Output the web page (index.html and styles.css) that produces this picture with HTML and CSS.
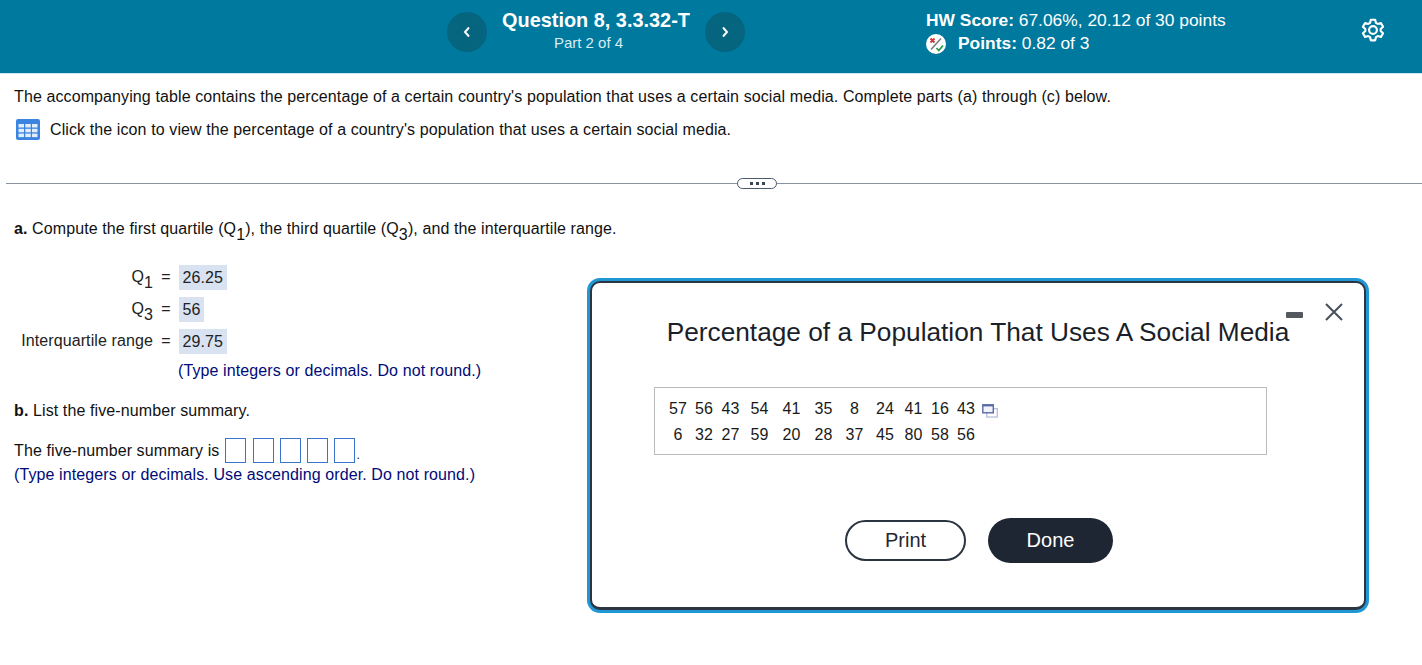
FILE: index.html
```html
<!DOCTYPE html>
<html lang="en">
<head>
    <meta charset="UTF-8">
    <meta name="viewport" content="width=device-width, initial-scale=1.0">
    <title>Question 8, 3.3.32-T</title>
    <link rel="stylesheet" href="styles.css">
</head>
<body>
    <header class="top-bar">
        <div class="question-nav">
            <button class="nav-btn" aria-label="Previous">
                <svg width="10" height="12" viewBox="0 0 10 12"><path d="M7 1.500 3 6l4 4.500" fill="none" stroke="#fff" stroke-width="2"/></svg>
            </button>
            <div class="question-title">
                <div class="question-name">Question 8, 3.3.32-T</div>
                <div class="question-part">Part 2 of 4</div>
            </div>
            <button class="nav-btn" aria-label="Next">
                <svg width="10" height="12" viewBox="0 0 10 12"><path d="M3 1.500 7 6l-4 4.500" fill="none" stroke="#fff" stroke-width="2"/></svg>
            </button>
        </div>
        <div class="score">
            <div><b>HW Score:</b> 67.06%, 20.12 of 30 points</div>
            <div class="score-points">
                <svg class="points-icon" width="20" height="20" viewBox="0 0 20 20">
                    <circle cx="10" cy="10" r="10" fill="#fff"/>
                    <path d="M4.500 4.500 8.500 8.500M8.500 4.500 4.500 8.500" stroke="#d0353b" stroke-width="1.800"/>
                    <path d="M5 15.500 15 4.500" stroke="#7a7a7a" stroke-width="1.500"/>
                    <path d="M10.500 14 12.800 16.500 17 11.500" fill="none" stroke="#2a9a46" stroke-width="1.800"/>
                </svg>
                <span><b>Points:</b> 0.82 of 3</span>
            </div>
        </div>
        <button class="settings-btn" aria-label="Settings">
            <svg width="26" height="26" viewBox="0 0 24 24" fill="none" stroke="#fff" stroke-width="2" stroke-linejoin="round">
                <path d="M10 2.500h4l.7 2.900 1.700 1 2.900-.8 2 3.400-2.200 2.100v1.800l2.200 2.100-2 3.400-2.900-.8-1.700 1-.7 2.900h-4l-.7-2.900-1.700-1-2.900.8-2-3.400 2.200-2.100v-1.800L2.700 9l2-3.400 2.900.8 1.700-1z"/>
                <circle cx="12" cy="12" r="3.600"/>
            </svg>
        </button>
    </header>

    <main class="content">
        <section class="intro">
            <p>The accompanying table contains the percentage of a certain country's population that uses a certain social media. Complete parts (a) through (c) below.</p>
            <p class="data-link">
                <svg class="table-icon" width="24" height="21" viewBox="0 0 24 21">
                    <rect width="24" height="21" rx="2" fill="#3b84e0"/>
                    <g fill="#e2eefc">
                        <rect x="2.500" y="5" width="5.500" height="3.500"/><rect x="9.300" y="5" width="5.500" height="3.500"/><rect x="16" y="5" width="5.500" height="3.500"/>
                        <rect x="2.500" y="9.800" width="5.500" height="3.500"/><rect x="9.300" y="9.800" width="5.500" height="3.500"/><rect x="16" y="9.800" width="5.500" height="3.500"/>
                        <rect x="2.500" y="14.600" width="5.500" height="3.500"/><rect x="9.300" y="14.600" width="5.500" height="3.500"/><rect x="16" y="14.600" width="5.500" height="3.500"/>
                    </g>
                </svg>
                <span>Click the icon to view the percentage of a country's population that uses a certain social media.</span>
            </p>
        </section>

        <div class="divider"><span class="divider-pill"><i></i><i></i><i></i></span></div>

        <section class="part-a">
            <p><b>a.</b> Compute the first quartile (Q<sub>1</sub>), the third quartile (Q<sub>3</sub>), and the interquartile range.</p>
            <div class="answers">
                <span class="answer-label">Q<sub>1</sub></span><span class="answer-eq">=</span><span><span class="answer-value">26.25</span></span>
                <span class="answer-label">Q<sub>3</sub></span><span class="answer-eq">=</span><span><span class="answer-value">56</span></span>
                <span class="answer-label">Interquartile range</span><span class="answer-eq">=</span><span><span class="answer-value">29.75</span></span>
            </div>
            <p class="hint hint-indent">(Type integers or decimals. Do not round.)</p>
        </section>

        <section class="part-b">
            <p><b>b.</b> List the five-number summary.</p>
            <div class="summary-line">
                <span>The five-number summary is</span>
                <span class="summary-boxes">
                    <span class="summary-box"></span><span class="summary-box"></span><span class="summary-box"></span><span class="summary-box"></span><span class="summary-box"></span>
                </span>
                <span class="summary-dot">.</span>
            </div>
            <p class="hint">(Type integers or decimals. Use ascending order. Do not round.)</p>
        </section>
    </main>

    <div class="modal">
        <button class="modal-min" aria-label="Minimize"></button>
        <button class="modal-close" aria-label="Close">
            <svg width="20" height="20" viewBox="0 0 20 20"><path d="M2 2 18 18M18 2 2 18" stroke="#46505c" stroke-width="2"/></svg>
        </button>
        <h2 class="modal-title">Percentage of a Population That Uses A Social Media</h2>
        <div class="data-box">
            <div class="data-grid">
                <span>57</span><span>56</span><span>43</span><span>54</span><span>41</span><span>35</span><span>8</span><span>24</span><span>41</span><span>16</span><span>43</span>
                <span>6</span><span>32</span><span>27</span><span>59</span><span>20</span><span>28</span><span>37</span><span>45</span><span>80</span><span>58</span><span>56</span>
            </div>
            <svg class="copy-icon" width="16" height="14" viewBox="0 0 16 14">
                <rect x="4.700" y="4.700" width="10.600" height="8.300" fill="#fff" stroke="#bcc3e2" stroke-width="1.400"/>
                <rect x="0.800" y="0.800" width="10.500" height="8" fill="#f2f3fa" stroke="#5a69a8" stroke-width="1.400"/>
                <rect x="0.800" y="0.800" width="10.500" height="1.600" fill="#5a69a8"/>
            </svg>
        </div>
        <div class="modal-actions">
            <button class="btn-print">Print</button>
            <button class="btn-done">Done</button>
        </div>
    </div>
</body>
</html>
```

FILE: styles.css
```css
* {
    margin: 0;
    padding: 0;
    box-sizing: border-box;
}

body {
    font-family: "Liberation Sans", Arial, sans-serif;
    font-size: 16px;
    color: #111;
    background-color: #fff;
    overflow: hidden;
}

button {
    font-family: inherit;
    border: none;
    background: none;
    cursor: pointer;
}

sub {
    font-size: 16px;
    line-height: 0;
    vertical-align: -6px;
}

.top-bar {
    display: flex;
    height: 74px;
    padding: 6px 36px 0 447px;
    background-color: #00799e;
    border-bottom: 1px solid #cfe4ec;
    color: #fff;
}

.question-nav {
    display: flex;
    align-items: flex-start;
    gap: 15px;
}

.nav-btn {
    display: flex;
    align-items: center;
    justify-content: center;
    width: 40px;
    height: 40px;
    margin-top: 6px;
    border-radius: 50%;
    background-color: #05657f;
}

.question-title {
    width: 188px;
    text-align: center;
}

.question-name {
    font-size: 19.900px;
    font-weight: bold;
    line-height: 28px;
    white-space: nowrap;
}

.question-part {
    font-size: 15px;
    line-height: 18px;
    color: #d6edf4;
    padding-right: 15px;
}

.score {
    width: 436px;
    margin-left: 181px;
    font-size: 17.400px;
    line-height: 23px;
    padding-top: 3px;
}

.score-points {
    display: flex;
    align-items: center;
    gap: 12px;
}

.points-icon {
    flex: none;
}

.settings-btn {
    height: 26px;
    margin-top: 11px;
}

.content {
    padding-top: 13px;
    letter-spacing: 0.105px;
}

.intro {
    padding-left: 14px;
}

.intro p {
    line-height: 20px;
}

.data-link {
    display: flex;
    align-items: center;
    gap: 10px;
    margin-top: 12px;
    margin-left: 2px;
}

.divider {
    display: flex;
    align-items: center;
    height: 12px;
    margin: 37px 0 0 6px;
    background: linear-gradient(#8a94a0, #8a94a0) center / 100% 1px no-repeat;
}

.divider-pill {
    display: flex;
    align-items: center;
    justify-content: center;
    gap: 3px;
    width: 40px;
    height: 11px;
    margin-left: 731px;
    background-color: #fff;
    border: 1px solid #4a5a6a;
    border-radius: 6px;
}

.divider-pill i {
    width: 3px;
    height: 3px;
    background-color: #3a4653;
}

.part-a {
    padding: 30px 0 0 14px;
}

.part-a > p:first-child {
    line-height: 20px;
}

.answers {
    display: grid;
    grid-template-columns: 139px 26px auto;
    grid-auto-rows: 32px;
    align-items: center;
    justify-items: start;
    width: max-content;
    margin-top: 22px;
}

.answer-label {
    justify-self: end;
    color: #222;
    white-space: nowrap;
}

.answer-eq {
    justify-self: center;
    color: #222;
}

.answer-value {
    display: block;
    height: 25px;
    padding: 0 3.500px;
    line-height: 26px;
    background-color: #d9e2f1;
    color: #222;
}

.hint {
    color: #000a78;
    line-height: 20px;
}

.hint-indent {
    margin-left: 164px;
    margin-top: 4px;
}

.part-b {
    padding: 20px 0 0 14px;
}

.part-b > p:first-child {
    line-height: 20px;
}

.summary-line {
    display: flex;
    align-items: center;
    gap: 6px;
    height: 25px;
    margin-top: 17px;
}

.summary-boxes {
    display: flex;
    gap: 6.250px;
}

.summary-box {
    width: 21px;
    height: 25px;
    background-color: #fff;
    border: 1px solid #3a74cc;
}

.summary-dot {
    margin-left: -5px;
    font-size: 12px;
    align-self: flex-end;
    line-height: 16px;
}

.part-b .hint {
    margin-top: 2px;
}

.modal {
    position: absolute;
    left: 590px;
    top: 281px;
    width: 776px;
    height: 329px;
    padding-top: 34px;
    background-color: #fff;
    border: solid #2d3540;
    border-width: 2px 2px 3px;
    border-radius: 10px;
    box-shadow: 0 0 0 3px #1f97d4;
}

.modal-min {
    position: absolute;
    right: 61px;
    top: 29px;
    width: 17px;
    height: 6px;
    border-radius: 1px;
    background-color: #54585f;
}

.modal-close {
    position: absolute;
    right: 20px;
    top: 19px;
    width: 20px;
    height: 20px;
}

.modal-title {
    font-size: 26.250px;
    font-weight: normal;
    line-height: 30px;
    text-align: center;
    color: #1a1f29;
}

.data-box {
    display: flex;
    align-items: flex-start;
    width: 613px;
    height: 68px;
    margin: 40px 0 0 62px;
    padding: 8px 0 0 10px;
    border: 1px solid #bbb;
}

.data-grid {
    display: grid;
    grid-template-columns: 26px 26px 27px 31px 33px 31px 31px 30px 27px 26px 26px;
    grid-auto-rows: 26px;
    align-items: center;
    justify-items: center;
    color: #1a1a1a;
}

.copy-icon {
    margin: 8px 0 0 3px;
}

.modal-actions {
    display: flex;
    align-items: center;
    gap: 22px;
    margin: 63px 0 0 253px;
}

.btn-print {
    width: 121px;
    height: 41px;
    font-size: 20px;
    color: #1f2633;
    background-color: #fff;
    border: 2.500px solid #2a3340;
    border-radius: 21px;
}

.btn-done {
    width: 125px;
    height: 45px;
    font-size: 20px;
    color: #fff;
    background-color: #1f2633;
    border-radius: 23px;
}
```
